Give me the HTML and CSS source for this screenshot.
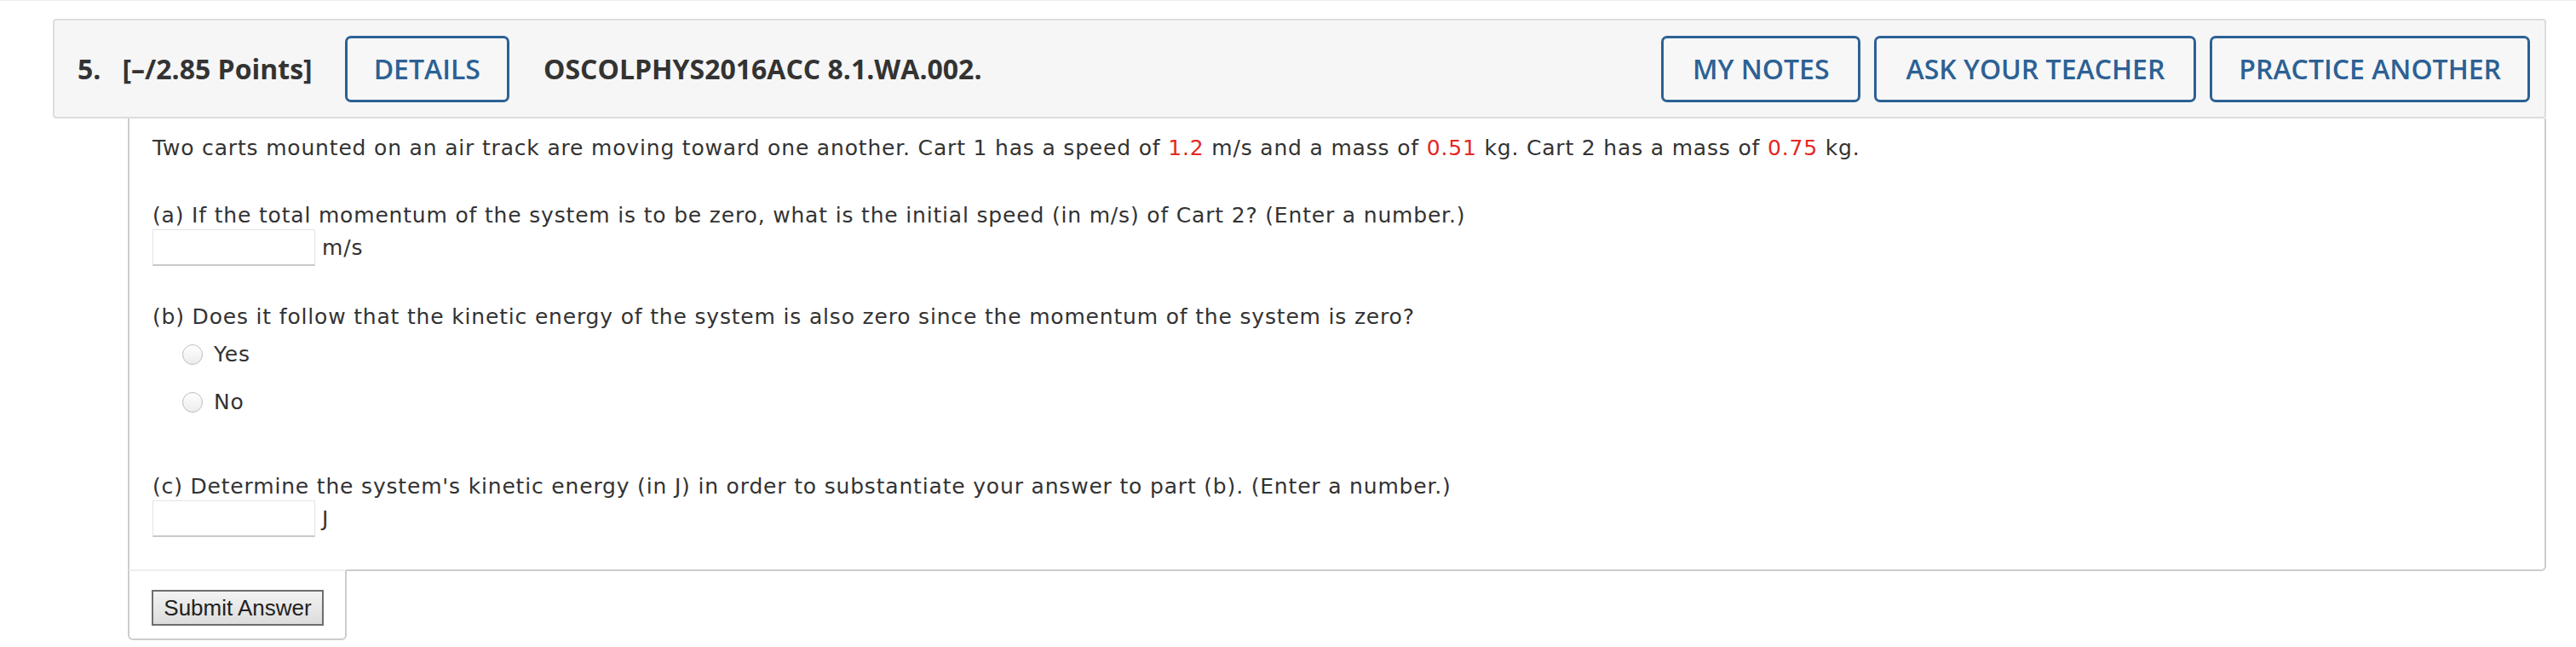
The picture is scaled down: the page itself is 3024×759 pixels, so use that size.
FILE: index.html
```html
<!DOCTYPE html>
<html>
<head>
<meta charset="utf-8">
<link rel="stylesheet" href="styles.css">
</head>
<body>
<div class="page">
  <div class="question">
    <div class="qhead">
      <span class="qnum">5.</span>
      <span class="qpts">[–/2.85 Points]</span>
      <button class="hbtn details">DETAILS</button>
      <span class="qtitle">OSCOLPHYS2016ACC 8.1.WA.002.</span>
      <div class="hright">
        <button class="hbtn wide">MY NOTES</button>
        <button class="hbtn wide">ASK YOUR TEACHER</button>
        <button class="hbtn">PRACTICE ANOTHER</button>
      </div>
    </div>
    <div class="qbody">
      <p class="intro">Two carts mounted on an air track are moving toward one another. Cart 1 has a speed of <span class="red">1.2</span> m/s and a mass of <span class="red">0.51</span> kg. Cart 2 has a mass of <span class="red">0.75</span> kg.</p>
      <p class="part pa">(a) If the total momentum of the system is to be zero, what is the initial speed (in m/s) of Cart 2? (Enter a number.)</p>
      <div class="ansrow"><input class="ans" type="text"><span class="unit">m/s</span></div>
      <p class="part pb">(b) Does it follow that the kinetic energy of the system is also zero since the momentum of the system is zero?</p>
      <label class="opt yes"><input class="radio" type="radio" name="b"><span>Yes</span></label>
      <label class="opt no"><input class="radio" type="radio" name="b"><span>No</span></label>
      <p class="part pc">(c) Determine the system's kinetic energy (in J) in order to substantiate your answer to part (b). (Enter a number.)</p>
      <div class="ansrow"><input class="ans" type="text"><span class="unit">J</span></div>
    </div>
    <div class="submitbox">
      <button class="submit">Submit Answer</button>
    </div>
  </div>
</div>
</body>
</html>
```
FILE: styles.css
```css
html, body {
  margin: 0;
  padding: 0;
  background: #ffffff;
}
.page {
  border-top: 1px solid #eeeeee;
  padding: 21px 35px 0 62px;
}
.question {
  width: 2927px;
}
.qhead {
  box-sizing: border-box;
  height: 117px;
  background: #f6f6f6;
  border: 2px solid #dddddd;
  border-radius: 4px;
  display: flex;
  align-items: center;
  padding: 0 17px 0 27px;
  font-family: "Open Sans", sans-serif;
  font-size: 32px;
  font-weight: 700;
  color: #333333;
}
.qnum {
  margin-right: 25px;
}
.hbtn {
  box-sizing: border-box;
  height: 78px;
  padding: 0 31px;
  border: 3px solid #2c6194;
  border-radius: 7px;
  background: #f7f7f7;
  color: #2c6194;
  font-family: "Open Sans", sans-serif;
  font-size: 32px;
  font-weight: 600;
  line-height: 1;
}
.hbtn.wide {
  padding: 0 34px;
}
.details {
  margin-left: 38px;
}
.qtitle {
  margin-left: 40px;
}
.hright {
  margin-left: auto;
  display: flex;
  gap: 16px;
}
.qbody {
  margin-left: 88px;
  border-left: 2px solid #cccccc;
  border-right: 2px solid #cccccc;
  border-bottom: 2px solid #cccccc;
  border-bottom-right-radius: 6px;
  padding: 19px 27px 38px 27px;
  font-family: "DejaVu Sans", Verdana, sans-serif;
  font-size: 25px;
  line-height: 32px;
  letter-spacing: 0.82px;
  color: #333333;
}
.qbody p {
  margin: 0;
}
.red {
  color: #e4281f;
}
.pa {
  margin-top: 47px !important;
}
.ansrow {
  display: flex;
  align-items: center;
  gap: 8px;
  height: 43px;
}
.ans {
  box-sizing: border-box;
  width: 191px;
  height: 43px;
  margin: 0;
  border: 1px solid #e4e4e4;
  border-bottom: 2px solid #c9c9c9;
  background: #ffffff;
  padding: 0;
}
.unit {
  line-height: 32px;
}
.pb {
  margin-top: 44px !important;
}
.opt {
  display: flex;
  align-items: center;
  gap: 13px;
  height: 32px;
  padding-left: 35px;
}
.yes {
  margin-top: 12px;
}
.no {
  margin-top: 24px;
}
.radio {
  appearance: none;
  -webkit-appearance: none;
  box-sizing: border-box;
  width: 24px;
  height: 24px;
  margin: 0;
  border: 1px solid #bdbdbd;
  border-radius: 50%;
  background: linear-gradient(#ffffff, #ececec);
}
.pc {
  margin-top: 67px !important;
}
.submitbox {
  box-sizing: border-box;
  margin-left: 88px;
  margin-top: -2px;
  width: 257px;
  border-left: 2px solid #cccccc;
  border-right: 2px solid #cccccc;
  border-bottom: 2px solid #cccccc;
  border-top: 2px solid #eeeeee;
  border-radius: 0 0 6px 6px;
  padding: 22px 0 15px 26px;
}
.submit {
  box-sizing: border-box;
  width: 202px;
  height: 42px;
  margin: 0;
  padding: 0;
  border: 2px solid #6e6e6e;
  background: linear-gradient(#f3f3f3, #dcdcdc);
  font-family: "Liberation Sans", Arial, sans-serif;
  font-size: 26px;
  color: #222222;
  line-height: 1;
}
```
